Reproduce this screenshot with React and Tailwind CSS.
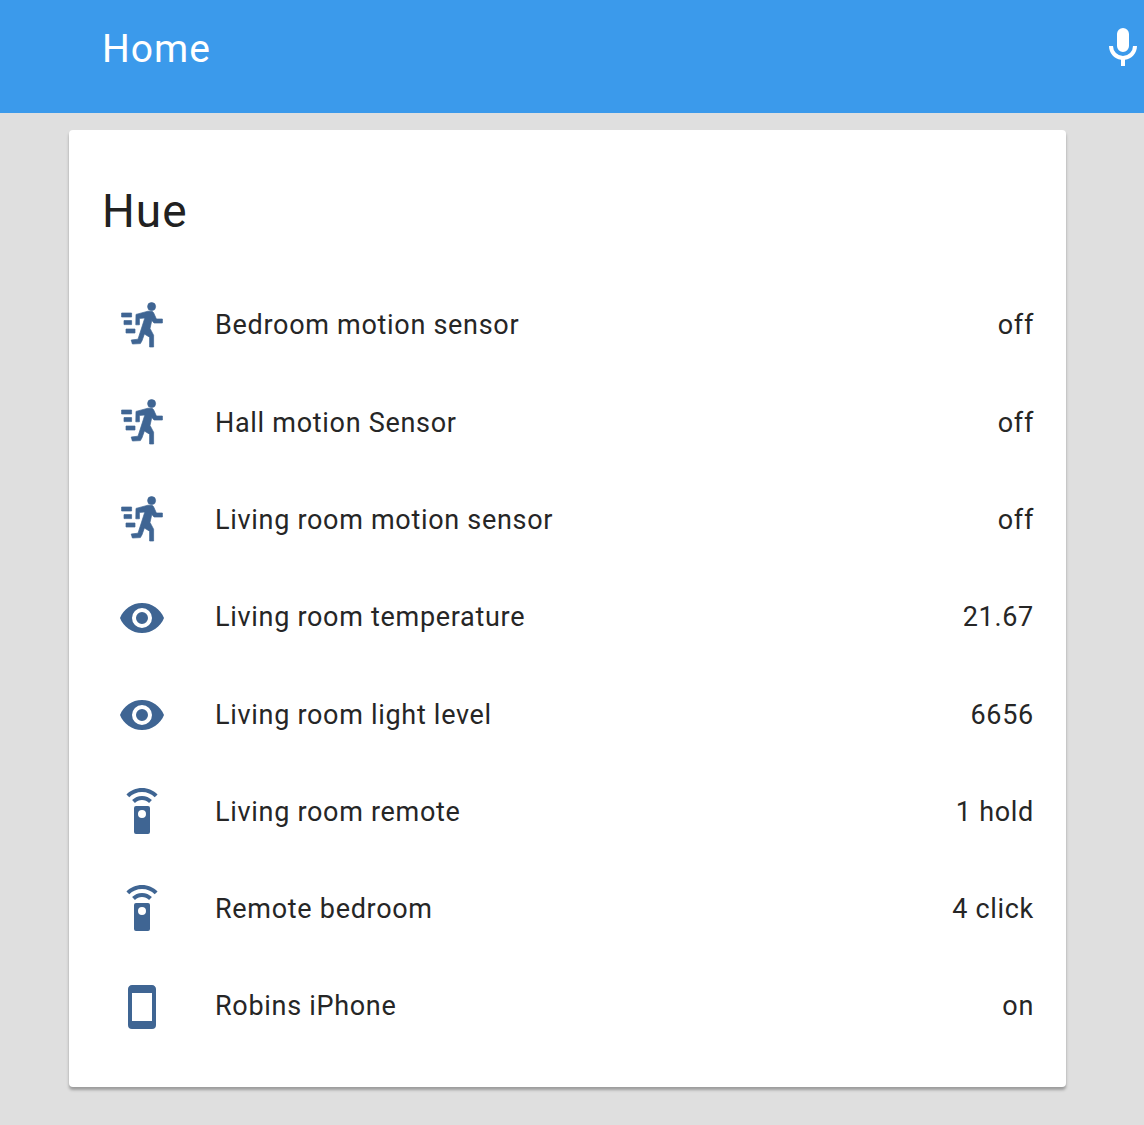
import React from "react";

const EYE =
  "M12,9A3,3 0 0,0 9,12A3,3 0 0,0 12,15A3,3 0 0,0 15,12A3,3 0 0,0 12,9M12,17A5,5 0 0,1 7,12A5,5 0 0,1 12,7A5,5 0 0,1 17,12A5,5 0 0,1 12,17M12,4.5C7,4.5 2.73,7.61 1,12C2.73,16.39 7,19.5 12,19.5C17,19.5 21.27,16.39 23,12C21.27,7.61 17,4.5 12,4.5Z";
const REMOTE =
  "M12,0C8.96,0 6.21,1.23 4.22,3.22L5.63,4.63C7.24,3.02 9.5,2 12,2C14.5,2 16.76,3.02 18.36,4.63L19.78,3.22C17.79,1.23 15.04,0 12,0M7.05,6.05L8.46,7.46C9.37,6.56 10.62,6 12,6C13.38,6 14.63,6.56 15.54,7.46L16.95,6.05C15.68,4.78 13.93,4 12,4C10.07,4 8.32,4.78 7.05,6.05M12,15A2,2 0 0,1 10,13A2,2 0 0,1 12,11A2,2 0 0,1 14,13A2,2 0 0,1 12,15M15,9H9A1,1 0 0,0 8,10V22A1,1 0 0,0 9,23H15A1,1 0 0,0 16,22V10A1,1 0 0,0 15,9Z";
const PHONE =
  "M17,19H7V5H17M17,1H7C5.89,1 5,1.89 5,3V21A2,2 0 0,0 7,23H17A2,2 0 0,0 19,21V3C19,1.89 18.1,1 17,1Z";
const MIC =
  "M12,2A3,3 0 0,1 15,5V11A3,3 0 0,1 12,14A3,3 0 0,1 9,11V5A3,3 0 0,1 12,2M19,11C19,14.53 16.39,17.44 13,17.93V21H11V17.93C7.61,17.44 5,14.53 5,11H7A5,5 0 0,0 12,16A5,5 0 0,0 17,11H19Z";
// the reference has an older running figure than the icon packages ship
const RUN =
  "M16.8,0.3A2,2 0 1,1 16.8,4.3A2,2 0 1,1 16.8,0.3Z" +
  "M1.8,5.5H6.8V7.5H1.8Z M3,9.3H6.8V11.3H3Z M4,13.5H8.5V15.5H4Z" +
  "M9,6.2L15,4.6H16.6C17.2,4.6 17.5,4.9 17.8,5.4L19.2,8.5H22.2V10.5H18L16.9,9.2L16,13.2L17.8,16.6V22.5H15.8V17.6L13.2,16L12,19.4L11.2,20.8L7.2,21L6.6,19L10,18.6L13.4,8L10.7,8.2V11.4H8.9Z";

const rows = [
  { icon: RUN, name: "Bedroom motion sensor", value: "off" },
  { icon: RUN, name: "Hall motion Sensor", value: "off" },
  { icon: RUN, name: "Living room motion sensor", value: "off" },
  { icon: EYE, name: "Living room temperature", value: "21.67" },
  { icon: EYE, name: "Living room light level", value: "6656" },
  { icon: REMOTE, name: "Living room remote", value: "1 hold" },
  { icon: REMOTE, name: "Remote bedroom", value: "4 click" },
  { icon: PHONE, name: "Robins iPhone", value: "on" },
];

function Icon({ d, className }) {
  return (
    <svg
      viewBox="0 0 24 24"
      className={className}
      fill="currentColor"
      stroke="currentColor"
      strokeWidth={d === RUN ? 0.35 : 0}
    >
      <path d={d} />
    </svg>
  );
}

export default function App() {
  return (
    <div className="h-[1125px] overflow-hidden bg-[#dfdfdf] font-['Roboto',sans-serif]">
      {/* Toolbar */}
      <header className="flex h-[113px] items-start bg-[#3b9aeb] pl-[102px] pr-0 text-white">
        <div className="mt-[24px] text-[39px] leading-[50px] tracking-[1px]">Home</div>
        <Icon d={MIC} className="ml-auto mr-[-3px] mt-[24px] h-12 w-12 shrink-0" />
      </header>

      {/* Card */}
      <div className="ml-[69px] mt-[17px] h-[957px] w-[997px] rounded-[4px] bg-white pl-[33px] pr-[32px] pt-[51px] shadow-[0_3px_3px_rgba(0,0,0,0.3)]">
        <div className="text-[46px] leading-[60px] tracking-[1px] text-[#212121]">Hue</div>
        <div className="mt-[36px]">
          {rows.map((row) => (
            <div
              key={row.name}
              className="flex h-[97.3px] items-center text-[27px] tracking-[0.7px] text-[#262626]"
            >
              <Icon d={row.icon} className="ml-[16px] h-12 w-12 shrink-0 text-[#3f6593]" />
              <div className="ml-[49px]">{row.name}</div>
              <div className="ml-auto">{row.value}</div>
            </div>
          ))}
        </div>
      </div>
    </div>
  );
}
